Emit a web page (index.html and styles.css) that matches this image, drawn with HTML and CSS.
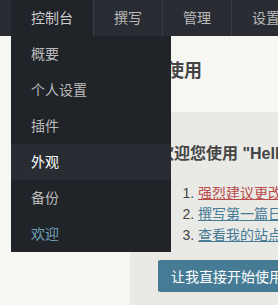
FILE: index.html
```html
<!DOCTYPE html>
<html lang="zh-CN">
<head>
    <meta charset="UTF-8">
    <meta name="viewport" content="width=device-width, initial-scale=1.0">
    <title>欢迎使用</title>
    <link rel="stylesheet" href="styles.css">
</head>
<body>
    <div class="head-nav">
        <ul class="nav-root">
            <li class="nav-item focus">
                <a class="nav-link" href="#">控制台</a>
                <ul class="nav-child">
                    <li><a href="#">概要</a></li>
                    <li><a href="#">个人设置</a></li>
                    <li><a href="#">插件</a></li>
                    <li class="hover"><a href="#">外观</a></li>
                    <li><a href="#">备份</a></li>
                    <li class="current"><a href="#">欢迎</a></li>
                </ul>
            </li>
            <li class="nav-item"><a class="nav-link" href="#">撰写</a></li>
            <li class="nav-item"><a class="nav-link" href="#">管理</a></li>
            <li class="nav-item"><a class="nav-link" href="#">设置</a></li>
        </ul>
    </div>

    <div class="main">
        <h2 class="page-title">欢迎使用</h2>
        <div class="welcome">
            <h3>欢迎您使用 "Hello World" 管理后台</h3>
            <ol>
                <li><a class="operate-delete" href="#">强烈建议更改你的默认密码</a></li>
                <li><a href="#">撰写第一篇日志</a></li>
                <li><a href="#">查看我的站点</a></li>
            </ol>
            <p><button class="btn primary" type="button">让我直接开始使用吧 &raquo;</button></p>
        </div>
    </div>
</body>
</html>
```

FILE: styles.css
```css
html, body {
    overflow: hidden;
}

body {
    margin: 0;
    background-color: #f6f6f3;
    color: #444;
    font-family: "Liberation Sans", "Noto Sans CJK SC", sans-serif;
    font-size: 14px;
    line-height: 1.5;
}

a {
    text-decoration: none;
}

.head-nav {
    height: 36px;
    padding-left: 11px;
    background-color: #292d33;
    white-space: nowrap;
}

.nav-root {
    display: flex;
    margin: 0;
    padding: 0;
    list-style: none;
}

.nav-item {
    position: relative;
}

.nav-link {
    display: block;
    padding: 0 20px;
    line-height: 36px;
    color: #bbb;
    border-right: 1px solid #383d45;
}

.nav-item.focus .nav-link {
    background-color: #202328;
    color: #ccc;
}

.nav-child {
    position: absolute;
    top: 36px;
    left: 0;
    z-index: 10;
    width: 160px;
    margin: 0;
    padding: 0;
    list-style: none;
    background-color: #202328;
}

.nav-child a {
    display: block;
    padding: 0 20px;
    line-height: 36px;
    color: #bbb;
}

.nav-child .hover a {
    background-color: #292d33;
    color: #fff;
}

.nav-child .current a {
    color: #6da1bb;
}

.main {
    width: 640px;
    padding-left: 130px;
}

.page-title {
    margin: 22px 0 27px;
    font-size: 18px;
    line-height: 27px;
    font-weight: bold;
}

.welcome {
    padding: 14px 28px;
    background-color: #e9e9e6;
}

.welcome h3 {
    margin: 16px 0 0;
    font-size: 16px;
    line-height: 24px;
}

.welcome ol {
    margin: 17px 0 14px;
    padding-left: 40px;
    line-height: 21px;
}

.welcome ol a {
    color: #467b96;
    text-decoration: underline;
}

.welcome ol a.operate-delete {
    color: #b94a48;
}

.welcome p {
    margin: 14px 0;
}

.btn {
    height: 32px;
    padding: 0 13px;
    border: none;
    border-radius: 2px;
    font-family: inherit;
    font-size: 14px;
    cursor: pointer;
}

.btn.primary {
    background-color: #467b96;
    color: #fff;
}
```
